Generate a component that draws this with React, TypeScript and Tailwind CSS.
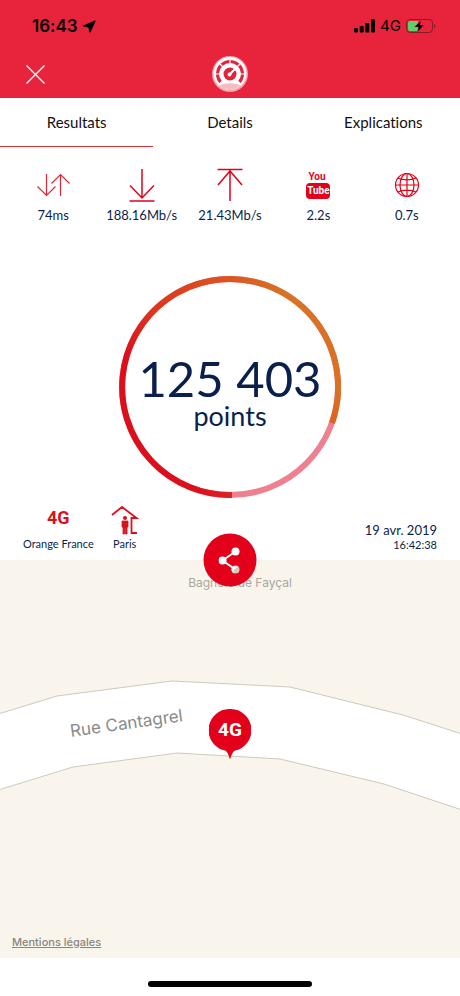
import React, { useState } from 'react';

const RED = '#e2001a';

const PingIcon = () => (
  <svg width="34" height="24" viewBox="0 0 34 24" fill="none" stroke="#dc2a35" strokeWidth="1.2" aria-hidden="true">
    <path d="M10.500 1V22.500M1.500 13.500L10.500 22.500L19.500 13.500" />
    <path d="M24.500 23V1.500M15.500 10.500L24.500 1.500L33.500 10.500" />
  </svg>
);

const DownloadIcon = () => (
  <svg width="26" height="34" viewBox="0 0 26 34" fill="none" stroke={RED} strokeWidth="1.5" aria-hidden="true">
    <path d="M13 1V30M1 17.500L13 30L25 17.500M.5 33H25.500" />
  </svg>
);

const UploadIcon = () => (
  <svg width="26" height="34" viewBox="0 0 26 34" fill="none" stroke={RED} strokeWidth="1.5" aria-hidden="true">
    <path d="M13 33V2M1 17L13 3L25 17M.5 1.500H25.500" />
  </svg>
);

const YouTubeIcon = () => (
  <div className="flex flex-col font-['Roboto',sans-serif] text-[10px] font-bold">
    <span className="pl-0.5 leading-[12px] text-[#e2001a]">You</span>
    <span className="w-6 rounded-[4px] bg-[#e2001a] text-center leading-[16px] text-white">Tube</span>
  </div>
);

const GlobeIcon = () => (
  <svg width="26" height="26" viewBox="0 0 26 26" fill="none" stroke={RED} strokeWidth="1.2" aria-hidden="true">
    <circle cx="13" cy="13" r="11.500" />
    <ellipse cx="13" cy="13" rx="7" ry="11.500" />
    <path d="M13 1.500V24.500M1.500 13H24.500M4 6C9 8.500 17 8.500 22 6M4 20C9 17.500 17 17.500 22 20" />
  </svg>
);

const GaugeLogo = () => (
  <svg width="36" height="36" viewBox="0 0 36 36" fill="none" aria-hidden="true">
    <circle cx="18" cy="18" r="18" fill="#f4a3ac" />
    <circle cx="18" cy="17.500" r="16.500" fill="#fff" />
    <path d="M8.500 26A12.500 12.500 0 1 1 27.500 26" stroke="#e0243b" strokeWidth="3" />
    <path d="M18 4V8M8 8L11 11M28 8L25 11M4 18H8M28 18H32" stroke="#fff" strokeWidth="1.2" />
    <circle cx="18" cy="18" r="6.500" fill="#e0243b" />
    <path d="M17 19L24 12" stroke="#fff" strokeWidth="2" />
    <circle cx="17.500" cy="18.500" r="2" fill="#fff" />
    <path d="M7 29.500A16 16 0 0 0 29 29.500C22 26.500 14 26.500 7 29.500Z" fill="#f6bcc3" />
  </svg>
);

const HomeIcon = () => (
  <svg width="28" height="30" viewBox="0 0 28 30" fill="none" stroke="#d9121f" aria-hidden="true">
    <path d="M1 10L11 2L25.500 13H20.500V28H26" strokeWidth="1.800" />
    <circle cx="14" cy="13" r="2" fill="#d9121f" stroke="none" />
    <path d="M11 16H17V22H16V29H14.500V23H13.500V29H12V22H11Z" fill="#d9121f" strokeWidth=".8" />
  </svg>
);

const metrics = [
  { name: 'Latence', value: '74ms', icon: <PingIcon /> },
  { name: 'Descendant', value: '188.16Mb/s', icon: <DownloadIcon /> },
  { name: 'Montant', value: '21.43Mb/s', icon: <UploadIcon /> },
  { name: 'YouTube', value: '2.2s', icon: <YouTubeIcon /> },
  { name: 'Web', value: '0.7s', icon: <GlobeIcon /> },
];

const tabs = ['Resultats', 'Details', 'Explications'];

const StatusBar = () => (
  <div className="flex h-13 items-center justify-between pl-8 pr-6 font-['Inter',sans-serif] text-black">
    <div className="flex items-center gap-1 pt-px">
      <span className="text-[17px] font-semibold">16:43</span>
      <svg width="14" height="13" viewBox="0 0 14 13" aria-hidden="true">
        <path d="M13 1L8 12L6.800 6.800L1.500 6Z" fill="#000" stroke="#000" strokeWidth="1.200" strokeLinejoin="round" />
      </svg>
    </div>
    <div className="flex items-center gap-[5px]">
      <svg width="21" height="14" viewBox="0 0 21 14" aria-hidden="true">
        <rect x="0" y="9" width="4" height="4.500" rx="1" />
        <rect x="5.700" y="7" width="4" height="6.500" rx="1" />
        <rect x="11.300" y="4" width="4" height="9.500" rx="1" />
        <rect x="17" y="0" width="4" height="13.500" rx="1" />
      </svg>
      <span className="text-[15px]">4G</span>
      <svg width="30" height="14" viewBox="0 0 30 14" aria-hidden="true">
        <rect x=".5" y=".5" width="26" height="13" rx="3.500" fill="none" stroke="#8d1826" />
        <path d="M4 2H12V12H4A2 2 0 0 1 2 10V4A2 2 0 0 1 4 2Z" fill="#5fd16a" />
        <path d="M28 5V9Q29.500 8.500 29.500 7T28 5Z" fill="#8d1826" />
        <path d="M15 1.500L8.500 8H12.500L11.500 13L18 6H14Z" fill="#000" stroke="#e8243d" strokeWidth=".4" />
      </svg>
    </div>
  </div>
);

const ScoreDial = () => (
  <div className="relative mx-auto mt-[51px] flex h-[222px] w-[222px] flex-col items-center justify-center pt-2">
    <svg className="absolute inset-0" viewBox="0 0 222 222" fill="none" strokeWidth="6" aria-hidden="true">
      <defs>
        <linearGradient id="score" gradientUnits="userSpaceOnUse" x1="30" y1="200" x2="230" y2="90">
          <stop offset=".16" stopColor="#dc0f1c" />
          <stop offset=".36" stopColor="#dc3520" />
          <stop offset=".73" stopColor="#dc5521" />
          <stop offset=".91" stopColor="#d97224" />
        </linearGradient>
      </defs>
      <circle cx="111" cy="111" r="108" stroke="#ee8090" />
      <path d="M113 219A108 108 0 1 1 213 147" stroke="url(#score)" />
    </svg>
    <span className="text-[49px] leading-[50px]">125 403</span>
    <span className="text-[27px] leading-[26px]">points</span>
  </div>
);

const MapView = () => (
  <section className="relative flex min-h-[398px] flex-1 items-end overflow-hidden bg-[#f9f5ed] font-['Inter',sans-serif]">
    <svg
      className="absolute inset-0 h-full w-full"
      viewBox="0 0 460 398"
      preserveAspectRatio="xMidYMid slice"
      aria-hidden="true"
    >
      <path
        d="M-5 155L57 136L172 121L290 127L403 155L465 175V251L384 224L280 199L177 193L73 207L-5 231Z"
        fill="#fff"
        stroke="#cfc9ba"
      />
      <text x="71" y="177" transform="rotate(-8 71 177)" fontSize="17" fill="#8a8a8a">
        Rue Cantagrel
      </text>
      <text x="240" y="27" textAnchor="middle" fontSize="12" fill="#aaa79f">
        Bagnole de Fayçal
      </text>
    </svg>
    <div className="absolute bottom-1/2 left-1/2 h-[50px] w-[42px] -translate-x-1/2">
      <svg className="absolute inset-0" viewBox="0 0 42 50" aria-hidden="true">
        <path d="M21 0A21 21 0 0 1 26 41.500Q23 43 21.500 49.500H20.500Q19 43 16 41.500A21 21 0 0 1 21 0Z" fill={RED} />
      </svg>
      <span className="relative block text-center font-['Roboto',sans-serif] text-[19px] font-bold leading-[42px] text-white">
        4G
      </span>
    </div>
    <a href="#mentions" className="relative mb-2 ml-3 text-[11px] font-medium leading-4 text-[#8a867b] underline">
      Mentions légales
    </a>
  </section>
);

export default function App() {
  const [active, setActive] = useState('Resultats');

  return (
    <div className="flex min-h-screen flex-col bg-white font-['Lato',sans-serif] text-[#0a1f4b] [font-variant-ligatures:none]">
      <header className="h-[98px] bg-[#e8243d]">
        <StatusBar />
        <div className="grid grid-cols-3 items-center px-6 pt-1">
          <button type="button" aria-label="Fermer" className="justify-self-start p-0.5">
            <svg width="19" height="19" viewBox="0 0 19 19" stroke="#fff" strokeWidth="1.300" aria-hidden="true">
              <path d="M.5 .5L18.500 18.500M18.500 .5L.5 18.500" />
            </svg>
          </button>
          <div className="justify-self-center">
            <GaugeLogo />
          </div>
        </div>
      </header>

      <nav className="grid h-[49px] grid-cols-3 text-[15px] text-[#111]">
        {tabs.map((tab) => (
          <button
            key={tab}
            type="button"
            onClick={() => setActive(tab)}
            className={`border-b ${active === tab ? 'border-[#e03030]' : 'border-transparent'}`}
          >
            {tab}
          </button>
        ))}
      </nav>

      <ul className="grid grid-cols-5 px-[9px] pt-[18px]">
        {metrics.map((m) => (
          <li key={m.name} className="flex flex-col items-center" title={m.name}>
            <div className="flex h-10 items-center">{m.icon}</div>
            <span className="text-[13px] leading-5">{m.value}</span>
          </li>
        ))}
      </ul>

      <ScoreDial />

      <div className="relative flex items-end justify-between px-[23px] pb-2 pt-1.5">
        <div className="flex gap-[17px] text-[11px] leading-4">
          <div className="flex flex-col items-center">
            <span className="font-['Roboto',sans-serif] text-[18px] font-bold leading-7 text-[#d9121f]">4G</span>
            <span className="pt-1">Orange France</span>
          </div>
          <div className="flex flex-col items-center">
            <div className="flex h-8 items-center">
              <HomeIcon />
            </div>
            <span>Paris</span>
          </div>
        </div>
        <div className="text-right">
          <p className="text-[13px] leading-4">19 avr. 2019</p>
          <p className="text-[11px] leading-[14px]">16:42:38</p>
        </div>
        <button
          type="button"
          aria-label="Partager"
          className="absolute bottom-0 left-1/2 z-10 flex size-[53px] -translate-x-1/2 translate-y-1/2 items-center justify-center rounded-full bg-[#e2001a]"
        >
          <svg width="24" height="28" viewBox="1 0 24 28" fill="#fff" aria-hidden="true">
            <path d="M18 5L5 14L18 23" fill="none" stroke="#fff" strokeWidth="2" />
            <circle cx="5" cy="14" r="4" />
            <circle cx="18" cy="5" r="4" />
            <circle cx="18" cy="23" r="4" fill="#cfc9b8" />
            <path d="M14 23A4 4 0 0 1 20 20L16 24V26.500Q14 25 14 23Z" />
          </svg>
        </button>
      </div>

      <MapView />

      <footer className="flex h-[38px] items-center justify-center pt-3.5">
        <div className="h-1.5 w-[164px] rounded-full bg-black" />
      </footer>
    </div>
  );
}
